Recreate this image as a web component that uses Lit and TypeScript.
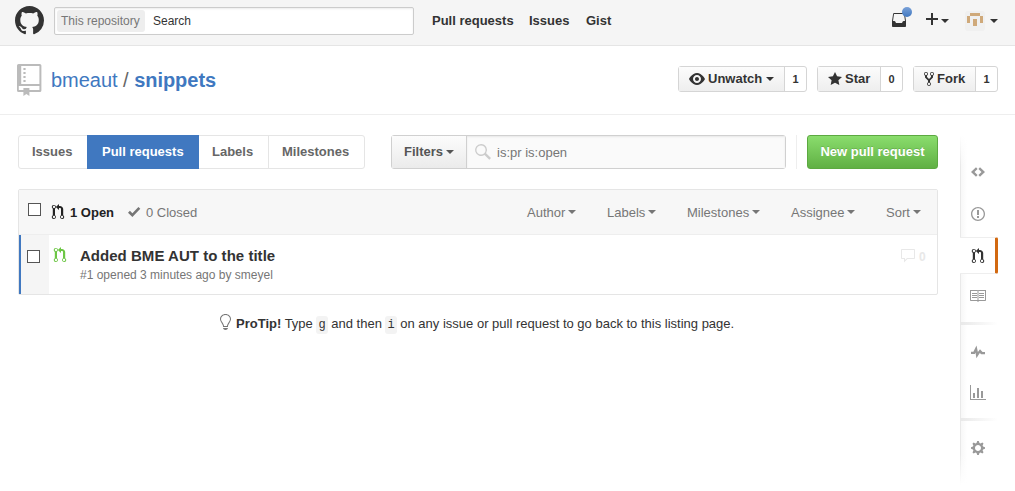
import { LitElement, html, css, svg } from "lit";
import { customElement, property } from "lit/decorators.js";

const ICONS: Record<string, [number, string]> = {
  mark: [16, "M8 0C3.58 0 0 3.58 0 8c0 3.54 2.29 6.53 5.47 7.59.4.07.55-.17.55-.38 0-.19-.01-.82-.01-1.49-2.01.37-2.53-.49-2.69-.94-.09-.23-.48-.94-.82-1.13-.28-.15-.68-.52-.01-.53.63-.01 1.08.58 1.23.82.72 1.21 1.87.87 2.33.66.07-.52.28-.87.51-1.07-1.78-.2-3.64-.89-3.64-3.95 0-.87.31-1.59.82-2.15-.08-.2-.36-1.02.08-2.12 0 0 .67-.21 2.2.82.64-.18 1.32-.27 2-.27.68 0 1.36.09 2 .27 1.53-1.04 2.2-.82 2.2-.82.44 1.1.16 1.92.08 2.12.51.56.82 1.27.82 2.15 0 3.07-1.87 3.75-3.65 3.95.29.25.54.73.54 1.48 0 1.07-.01 1.93-.01 2.2 0 .21.15.46.55.38A8.013 8.013 0 0 0 16 8c0-4.42-3.58-8-8-8z"],
  repo: [12, "M.8 0h10.6a.8.8 0 0 1 .8.8v12.400a.8.8 0 0 1-.8.800H6.200v2L4.700 15 3.200 16v-2H.8a.8.8 0 0 1-.8-.8V.8A.8.8 0 0 1 .8 0zM2.100 1v9H11.200V1zM.9 11v2H3.200V12H6.200v1h5v-2zM3.200 2h1.100v1H3.200zM3.200 4h1.100v1H3.200zM3.200 6h1.100v1H3.200zM3.200 8h1.100v1H3.200z"],
  eye: [16, "M8.06 2C3 2 0 8 0 8s3 6 8.06 6C13 14 16 8 16 8s-3-6-7.94-6zM8 12c-2.2 0-4-1.78-4-4 0-2.2 1.8-4 4-4 2.22 0 4 1.8 4 4 0 2.22-1.78 4-4 4zm2-4c0 1.11-.89 2-2 2-1.11 0-2-.89-2-2 0-1.11.89-2 2-2 1.11 0 2 .89 2 2z"],
  star: [14, "M14 6l-4.9-.64L7 1 4.9 5.36 0 6l3.6 3.26L2.67 14 7 11.67 11.33 14l-.93-4.74z"],
  fork: [10, "M8 1a1.993 1.993 0 0 0-1 3.72V6L5 8 3 6V4.72A1.993 1.993 0 0 0 2 1a1.993 1.993 0 0 0-1 3.72V6.5l3 3v1.78A1.993 1.993 0 0 0 5 15a1.993 1.993 0 0 0 1-3.72V9.5l3-3V4.72A1.993 1.993 0 0 0 8 1zM2 4.2C1.34 4.2.8 3.65.8 3c0-.65.55-1.2 1.2-1.2.65 0 1.2.55 1.2 1.2 0 .65-.55 1.2-1.2 1.2zm3 10c-.66 0-1.2-.55-1.2-1.2 0-.65.55-1.2 1.2-1.2.65 0 1.2.55 1.2 1.2 0 .65-.55 1.2-1.2 1.2zm3-10c-.66 0-1.2-.55-1.2-1.2 0-.65.55-1.2 1.2-1.2.65 0 1.2.55 1.2 1.2 0 .65-.55 1.2-1.2 1.2z"],
  pull: [12, "M11.2 11.28V5c-.03-.78-.34-1.47-.94-2.06C9.46 2.35 8.78 2.03 8 2H7V0L3.800 3l3.200 3V4h1c.27.02.48.11.69.31.21.2.3.42.31.69v6.28A1.993 1.993 0 0 0 10 15a1.993 1.993 0 0 0 1.200-3.72zm-1.200 2.92c-.66 0-1.2-.55-1.2-1.2 0-.65.55-1.2 1.2-1.2.65 0 1.2.55 1.2 1.2 0 .65-.55 1.2-1.2 1.2zM4 3c0-1.11-.89-2-2-2a1.993 1.993 0 0 0-1.200 3.72v6.56A1.993 1.993 0 0 0 2 15a1.993 1.993 0 0 0 1-3.72V4.72c.59-.34 1-.98 1-1.72zm-.8 10c0 .66-.55 1.2-1.2 1.2-.65 0-1.2-.55-1.2-1.2 0-.65.55-1.2 1.2-1.2.65 0 1.2.55 1.2 1.2zM2 4.2C1.34 4.2.8 3.65.8 3c0-.65.55-1.2 1.2-1.2.65 0 1.2.55 1.2 1.2 0 .65-.55 1.2-1.2 1.2z"],
  check: [12, "M12.300 4.800L4.400 13 0 8.700l1.900-1.900L4.400 9.200 10.400 3z"],
  code: [14, "M5 3.200L0 8l5 4.800L6.600 11 3.500 8l3.100-3zM9 3.200L7.400 5l3.100 3-3.100 3L9 12.800 14 8z"],
  issue: [14, "M7 2.3c3.14 0 5.7 2.56 5.7 5.7s-2.56 5.7-5.7 5.7A5.71 5.71 0 0 1 1.3 8c0-3.14 2.56-5.7 5.7-5.7zM7 1C3.14 1 0 4.14 0 8s3.14 7 7 7 7-3.14 7-7-3.14-7-7-7zm1 3H6v5h2V4zm0 6H6v2h2v-2z"],
  book: [16, "M2 5h5v1H2V5zm0 3h5V7H2v1zm0 2h5V9H2v1zm12-5H9v1h5V5zm0 2H9v1h5V7zm0 2H9v1h5V9zm2-7v10c0 .55-.45 1-1 1H9l-1 1-1-1H1c-.55 0-1-.45-1-1V2h7.500l.5.5.5-.5H16zM7.500 3H1v9h6.500V3zm7.500 0H8.500v9H15V3z"],
  pulse: [14, "M11.500 8L9 5.200 6.900 8 5.500 1.400 2.400 7.700H0v2.400h3.800l.7-1.500.9 5.600L8.800 9l1.500 1.200H14V7.900z"],
  graph: [16, "M16 14v1H0V0h1v14h15zM5 13H3V8h2v5zm4 0H7V3h2v10zm4 0h-2V6h2v7z"],
  gear: [14, "M14 8.77v-1.6l-1.94-.64-.45-1.09.88-1.84-1.13-1.13-1.81.91-1.09-.45-.69-1.92h-1.6l-.63 1.94-1.11.45-1.84-.88-1.13 1.13.91 1.81-.45 1.09L0 7.23v1.59l1.94.64.45 1.09-.88 1.84 1.13 1.13 1.81-.91 1.09.45.69 1.92h1.59l.63-1.94 1.11-.45 1.84.88 1.13-1.13-.92-1.81.47-1.09L14 8.75v.02zM7 11c-1.66 0-3-1.34-3-3s1.34-3 3-3 3 1.34 3 3-1.34 3-3 3z"],
  comment: [16, "M14 1H2c-.55 0-1 .45-1 1v8c0 .55.45 1 1 1h2v3.5L7.5 11H14c.55 0 1-.45 1-1V2c0-.55-.45-1-1-1zm0 9H7l-2 2v-2H2V2h12v8z"],
  bulb: [13, "M6.5 0C3.48 0 1 2.19 1 5c0 .92.55 2.25 1 3 1.34 2.25 1.78 2.78 2 4v1h5v-1c.22-1.22.66-1.75 2-4 .45-.75 1-2.08 1-3 0-2.81-2.48-5-5.5-5zm3.64 7.48c-.25.44-.47.8-.67 1.11-.86 1.41-1.25 2.06-1.45 3.23-.02.05-.02.11-.02.17H5c0-.06 0-.13-.02-.17-.2-1.17-.59-1.83-1.45-3.23-.2-.31-.42-.67-.67-1.11C2.44 6.78 2 5.65 2 5c0-2.2 2.02-4 4.5-4 1.22 0 2.36.42 3.22 1.19C10.55 2.94 11 3.94 11 5c0 .66-.44 1.78-.86 2.48zM4 14h5c-.23 1.14-1.3 2-2.5 2s-2.27-.86-2.5-2z"],
  inbox: [14, "M14 9l-1.130-7.140c-.08-.48-.5-.86-1-.86H2.130c-.5 0-.92.38-1 .86L0 9v5c0 .55.45 1 1 1h12c.55 0 1-.45 1-1V9zm-3.280.55l-.44.89c-.17.34-.52.56-.91.56H4.610c-.38 0-.72-.22-.89-.55l-.44-.91c-.17-.33-.52-.55-.89-.55H1l1-7h10l1 7h-1.380c-.39 0-.73.22-.91.55z"],
  plus: [14, "M6 1h2v5h5v2H8v5H6V8H1V6h5z"],
  search: [16, "M6 0a6 6 0 1 0 3.500 10.900L14.300 15.700 16 14 11.100 9.200A6 6 0 0 0 6 0zm0 1.400a4.600 4.600 0 1 1 0 9.200 4.600 4.600 0 0 1 0-9.200z"],
};

@customElement("oct-icon")
class OctIcon extends LitElement {
  static styles = css`
    :host { display: block; flex: none; }
    .glyph { display: block; fill: currentColor; overflow: visible; }
  `;
  @property() name = "";
  @property({ type: Number }) size = 16;
  render() {
    const [w, d] = ICONS[this.name];
    return html`<svg class="glyph" width=${(w * this.size) / 16} height=${this.size} viewBox="0 0 ${w} 16">${svg`<path fill-rule="evenodd" d=${d}></path>`}</svg>`;
  }
}

@customElement("app-root")
class AppRoot extends LitElement {
  static styles = css`
    :host {
      display: block; width: 1015px; height: 491px; overflow: hidden; background: #fff;
      font: 13px/18px "Liberation Sans", Arial, sans-serif; color: #333;
    }
    * { box-sizing: border-box; }
    div, span, b, a { white-space: nowrap; }
    .caret { flex: none; border: 4px solid transparent; border-top-color: currentColor; border-bottom: 0; }

    .top { display: flex; height: 46px; padding-left: 15px; background: #f5f5f5; border-bottom: 1px solid #e5e5e5; }
    .logo { width: 39px; padding-top: 6px; }
    .search { display: flex; width: 360px; height: 28px; margin-top: 7px; padding: 2px; background: #fff;
      border: 1px solid #ccc; border-radius: 2px; box-shadow: inset 0 1px 2px rgba(0,0,0,.075); }
    .scope { width: 88px; height: 22px; padding-left: 4px; line-height: 22px; font-size: 12px; color: #777; background: #eee; border-radius: 3px; }
    .typed { padding-left: 8px; font-size: 12px; line-height: 22px; }
    .nav { display: flex; width: 459px; padding: 12px 0 0 18px; font-weight: bold; }
    .n1 { width: 97px; }
    .n2 { width: 57px; }
    .user { display: flex; }
    .inbox { position: relative; width: 33px; padding: 12px 0 0 19px; }
    .dot { position: absolute; left: 29px; top: 7px; width: 10px; height: 10px; border-radius: 50%; background: linear-gradient(#7aa1d8, #4078c0); }
    .add { display: flex; width: 44px; padding: 12px 0 0 19px; }
    .add .caret { margin: 7px 0 0 2px; }
    .avatar { display: flex; padding-top: 11px; margin-left: 15px; }
    .avatar .caret { margin: 8px 0 0 5px; }

    .head { display: flex; height: 69px; padding: 18px 17px 0; border-bottom: 1px solid #eee; }
    .book { width: 34px; color: #bbb; }
    .title { flex: 1; padding-top: 4px; font-size: 20px; line-height: 24px; letter-spacing: -.03px; color: #4078c0; }
    .sep { color: #666; }
    .actions { display: flex; gap: 10px; padding-top: 2px; }
    .social { display: flex; height: 26px; border: 1px solid #d5d5d5; border-radius: 3px; font-weight: bold; }
    .act { display: flex; align-items: center; border-right: 1px solid #d5d5d5; background: linear-gradient(#fcfcfc, #eee); }
    .act oct-icon { margin-right: 3px; }
    .act .caret { margin-left: 4px; }
    .count { flex: 1; text-align: center; font-size: 11px; line-height: 24px; }
    .watch { width: 129px; } .watch .act { width: 106px; padding-left: 10px; }
    .stars { width: 86px; } .stars .act { width: 63px; padding-left: 10px; }
    .forks { width: 85px; } .forks .act { width: 62px; padding-left: 10px; }

    .page { display: flex; padding: 20px 17px 0 18px; }
    .main { width: 920px; }
    .bar { display: flex; height: 34px; font-weight: bold; line-height: 32px; }
    .tabs { display: flex; width: 347px; margin-right: 26px; border: 1px solid #e5e5e5; border-radius: 3px; color: #666; }
    .tab { border-right: 1px solid #e5e5e5; padding-left: 13px; }
    .tab:last-child { border-right: 0; }
    .t1 { width: 68px; border: 0; } .t3 { width: 70px; } .t4 { flex: 1; }
    .t2 { width: 112px; margin: -1px 0; padding-left: 15px; line-height: 34px; color: #fff; background: #4078c0; border: 0; }
    .filters { display: flex; width: 395px; border: 1px solid #d0d0d0; border-radius: 3px; }
    .fbtn { display: flex; align-items: center; width: 75px; padding-left: 12px; gap: 3px; color: #555; border-right: 1px solid #d0d0d0; background: linear-gradient(#fcfcfc, #ebebeb); }
    .query { display: flex; flex: 1; padding: 8px 0 0 8px; gap: 6px; background: #fafafa; box-shadow: inset 0 1px 2px rgba(0,0,0,.075); font-weight: normal; line-height: 18px; color: #767676; }
    .query oct-icon { color: #ccc; }
    .rule { width: 1px; margin: 0 10px; background: #eee; }
    .new { width: 131px; border: 1px solid #5ca941; border-radius: 3px; text-align: center; color: #fff; background: linear-gradient(#8add6d, #60b044); text-shadow: 0 -1px 0 rgba(0,0,0,.15); }

    .list { margin-top: 20px; height: 106px; border: 1px solid #e5e5e5; border-radius: 2px; }
    .lhead { display: flex; height: 45px; padding-left: 9px; background: #f7f7f7; border-bottom: 1px solid #eee; color: #767676; line-height: 45px; }
    .box { width: 13px; height: 13px; background: #fff; border: 1px solid #555; }
    .lhead .box { margin-top: 13px; }
    .open { display: flex; width: 75px; margin-left: 11px; gap: 6px; font-weight: bold; color: #222; }
    .open oct-icon, .closed oct-icon { margin-top: 14px; }
    .closed { display: flex; gap: 6px; width: 400px; padding-left: 1px; }
    .drop { display: flex; align-items: center; gap: 3px; }
    .d1, .d2 { width: 80px; } .d3 { width: 104px; } .d4 { width: 95px; }
    .row { display: flex; height: 59px; }
    .sel { width: 30px; padding: 15px 0 0 6px; background: #f5f5f5; border-left: 2px solid #4078c0; }
    .state { width: 31px; padding: 12px 0 0 5px; color: #6cc644; }
    .body { flex: 1; padding-top: 11px; }
    .name { font-size: 15px; line-height: 20px; font-weight: bold; letter-spacing: .03px; }
    .meta { padding-top: 1px; font-size: 12px; line-height: 17px; color: #767676; }
    .replies { display: flex; width: 37px; gap: 3px; padding-top: 13px; font-size: 12px; font-weight: bold; color: #e8e8e8; }
    .tip { display: flex; margin: 20px 0 0 201px; line-height: 18px; }
    .bulb { width: 17px; margin-top: -1px; color: #777; }
    .tip code { display: inline-block; padding: 0 2px; font: 12px/18px "Liberation Mono", monospace; background: #f3f3f3; border-radius: 3px; }

    .side { width: 38px; margin-left: 22px; height: 350px; display: flex; flex-direction: column; color: #999;
      background: linear-gradient(#fff, rgba(255,255,255,0) 9%, rgba(255,255,255,0) 91%, #fff), linear-gradient(90deg, #e9e9e9 1px, #f7f7f7 1px, #fff 7px); }
    .item { display: flex; flex: none; justify-content: center; align-items: center; height: 41px; padding-right: 2px; }
    .first { height: 42px; margin-top: 16px; }
    .second { height: 42px; margin-bottom: 2px; }
    .cur { height: 37px; color: #333; background: #fff; border: solid #eee; border-width: 1px 0; border-right: 3px solid #d26911; border-radius: 0 2px 2px 0; padding: 0 0 0 1px; }
    .wiki { height: 43px; }
    .line { flex: none; height: 3px; margin: 5px 0 6px; background: linear-gradient(90deg, #e8e8e8, #fff); }
  `;
  render() {
    const caret = html`<span class="caret"></span>`;
    return html`
      <div class="top">
        <div class="logo"><oct-icon name="mark" size="29"></oct-icon></div>
        <div class="search"><span class="scope">This repository</span><span class="typed">Search</span></div>
        <div class="nav"><span class="n1">Pull requests</span><span class="n2">Issues</span><span>Gist</span></div>
        <div class="user">
          <div class="inbox"><oct-icon name="inbox"></oct-icon><span class="dot"></span></div>
          <div class="add"><oct-icon name="plus"></oct-icon>${caret}</div>
          <div class="avatar">
            <svg width="20" height="20" viewBox="0 0 20 20"><rect width="20" height="20" rx="3" fill="#f0f0f0"></rect><path fill="#cfa97a" d="M5 2h10v3H5zM2 5h3v7H2zM15 5h3v7h-3zM8 8h4v7H8z"></path></svg>${caret}
          </div>
        </div>
      </div>
      <div class="head">
        <div class="book"><oct-icon name="repo" size="32"></oct-icon></div>
        <div class="title">bmeaut <span class="sep">/</span> <b>snippets</b></div>
        <div class="actions">
          <div class="social watch"><div class="act"><oct-icon name="eye"></oct-icon>Unwatch${caret}</div><span class="count">1</span></div>
          <div class="social stars"><div class="act"><oct-icon name="star"></oct-icon>Star</div><span class="count">0</span></div>
          <div class="social forks"><div class="act"><oct-icon name="fork"></oct-icon>Fork</div><span class="count">1</span></div>
        </div>
      </div>
      <div class="page">
        <div class="main">
          <div class="bar">
            <div class="tabs"><span class="tab t1">Issues</span><span class="tab t2">Pull requests</span><span class="tab t3">Labels</span><span class="tab t4">Milestones</span></div>
            <div class="filters"><div class="fbtn">Filters${caret}</div><div class="query"><oct-icon name="search"></oct-icon>is:pr is:open</div></div>
            <span class="rule"></span>
            <div class="new">New pull request</div>
          </div>
          <div class="list">
            <div class="lhead">
              <span class="box"></span>
              <div class="open"><oct-icon name="pull"></oct-icon>1 Open</div>
              <div class="closed"><oct-icon name="check"></oct-icon>0 Closed</div>
              <div class="drop d1">Author${caret}</div><div class="drop d2">Labels${caret}</div><div class="drop d3">Milestones${caret}</div><div class="drop d4">Assignee${caret}</div><div class="drop">Sort${caret}</div>
            </div>
            <div class="row">
              <div class="sel"><div class="box"></div></div>
              <div class="state"><oct-icon name="pull"></oct-icon></div>
              <div class="body"><div class="name">Added BME AUT to the title</div><div class="meta">#1 opened 3 minutes ago by smeyel</div></div>
              <div class="replies"><oct-icon name="comment"></oct-icon>0</div>
            </div>
          </div>
          <div class="tip"><span class="bulb"><oct-icon name="bulb"></oct-icon></span><span><b>ProTip!</b> Type <code>g</code> and then <code>i</code> on any issue or pull request to go back to this listing page.</span></div>
        </div>
        <div class="side">
          <div class="item first"><oct-icon name="code"></oct-icon></div>
          <div class="item second"><oct-icon name="issue"></oct-icon></div>
          <div class="item cur"><oct-icon name="pull"></oct-icon></div>
          <div class="item wiki"><oct-icon name="book"></oct-icon></div>
          <div class="line"></div>
          <div class="item"><oct-icon name="pulse"></oct-icon></div>
          <div class="item"><oct-icon name="graph"></oct-icon></div>
          <div class="line"></div>
          <div class="item"><oct-icon name="gear"></oct-icon></div>
        </div>
      </div>
    `;
  }
}
